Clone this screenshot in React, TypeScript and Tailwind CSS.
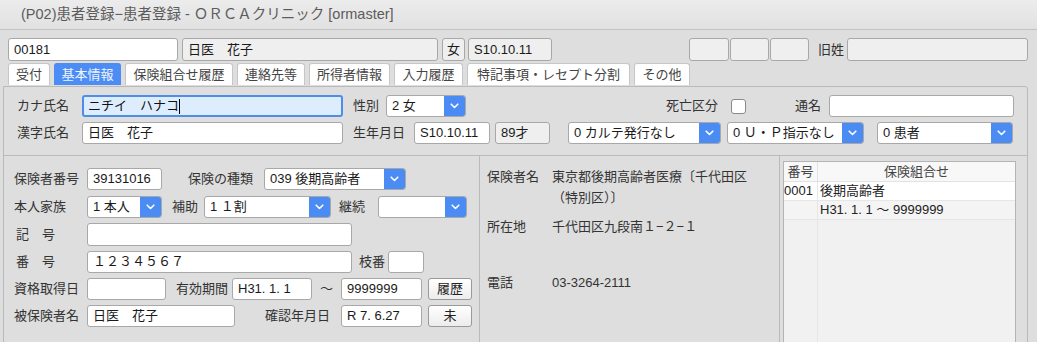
import React from "react";

const field = "h-full rounded-[3px] border border-[#a8a8a8] px-[5px] flex items-center text-[13px] text-[#1a1a1a] whitespace-nowrap overflow-hidden";
const white = `${field} bg-white`;
const gray = `${field} bg-[#efefef]`;
const label = "text-[13px] text-[#333] whitespace-nowrap flex items-center h-full";

function Chevron() {
  return (
    <svg width="9" height="6" viewBox="0 0 9 6" fill="none">
      <path d="M1.2 1.2 4.5 4.5 7.8 1.2" stroke="white" strokeWidth="1.6" strokeLinecap="round" strokeLinejoin="round" />
    </svg>
  );
}

function Select({ value, w }: { value: string; w: string }) {
  return (
    <div className={`${w} h-full flex rounded-[3px] border border-[#a8a8a8] bg-white overflow-hidden`}>
      <div className="flex-1 flex items-center px-[5px] text-[13px] text-[#1a1a1a] whitespace-nowrap">{value}</div>
      <div className="w-[21px] bg-[#4a8cf3] flex items-center justify-center">
        <Chevron />
      </div>
    </div>
  );
}

function Btn({ text }: { text: string }) {
  return (
    <div className="ml-[6px] w-[44px] h-full rounded-[3px] border border-[#9a9a9a] bg-gradient-to-b from-white to-[#ececec] flex items-center justify-center text-[13px] text-[#222]">
      {text}
    </div>
  );
}

const tabs = [
  { t: "受付", w: "w-[42px]" },
  { t: "基本情報", w: "w-[67px]", active: true },
  { t: "保険組合せ履歴", w: "w-[108px]" },
  { t: "連絡先等", w: "w-[68px]" },
  { t: "所得者情報", w: "w-[81px]" },
  { t: "入力履歴", w: "w-[69px]" },
  { t: "特記事項・レセプト分割", w: "w-[163px]" },
  { t: "その他", w: "w-[56px]" },
];

export default function App() {
  return (
    <div className="w-[1037px] h-[342px] overflow-hidden bg-[#dedede] font-['Liberation_Sans','Noto_Sans_CJK_JP',sans-serif]">
      {/* title bar */}
      <div className="h-[30px] border-b border-[#c2c2c2] bg-gradient-to-b from-[#ececec] to-[#e1e1e1] pl-[21px] flex items-center text-[14.5px] text-[#5c5c5c]">
        (P02)患者登録−患者登録 - ＯＲＣＡクリニック [ormaster]
      </div>

      {/* patient header */}
      <div className="mt-[8px] h-[23px] pl-[8px] flex">
        <div className={`${white} w-[170px]`}>00181</div>
        <div className={`${gray} w-[256px] ml-[4px]`}>日医　花子</div>
        <div className={`${gray} w-[23px] ml-[4px] justify-center px-0`}>女</div>
        <div className={`${gray} w-[84px] ml-[3px]`}>S10.10.11</div>
        <div className={`${gray} w-[40px] ml-[137px]`} />
        <div className={`${gray} w-[39px] ml-[1px]`} />
        <div className={`${gray} w-[39px] ml-[1px]`} />
        <div className={`${label} ml-[9px] w-[29px]`}>旧姓</div>
        <div className={`${gray} w-[181px]`} />
      </div>

      {/* tabs */}
      <div className="mt-[2px] h-[22px] pl-[8px] flex gap-[4px]">
        {tabs.map((tab) => (
          <div
            key={tab.t}
            className={`${tab.w} h-full rounded-t-[3px] border border-b-0 flex items-center justify-center text-[13px] whitespace-nowrap ${
              tab.active ? "bg-[#4b8cf5] border-[#4b8cf5] text-[#eef4ff]" : "bg-white border-[#c6c6c6] text-[#444]"
            }`}
          >
            {tab.t}
          </div>
        ))}
      </div>

      {/* main panel */}
      <div className="ml-[3px] mt-[1px] w-[1025px] h-[260px] border border-[#bababa] rounded-tr-[3px] flex flex-col">
        <div className="pt-[8px] pb-[11px]">
          <div className="h-[22px] pl-[13px] flex">
            <div className={`${label} w-[65px]`}>カナ氏名</div>
            <div className="w-[261px] h-full rounded-[3px] border-2 border-[#4d8fe6] bg-[#deedfd] px-[4px] flex items-center text-[13px] text-[#111]">
              ニチイ　ハナコ<span className="w-[1px] h-[15px] bg-black" />
            </div>
            <div className={`${label} ml-[10px] w-[33px]`}>性別</div>
            <Select value="2 女" w="w-[80px]" />
            <div className={`${label} ml-[200px] w-[65px]`}>死亡区分</div>
            <div className="self-center w-[15px] h-[15px] rounded-[3px] border border-[#8a8a8a] bg-white" />
            <div className={`${label} ml-[49px] w-[34px]`}>通名</div>
            <div className={`${white} w-[185px]`} />
          </div>
          <div className="mt-[5px] h-[22px] pl-[13px] flex">
            <div className={`${label} w-[65px]`}>漢字氏名</div>
            <div className={`${white} w-[261px]`}>日医　花子</div>
            <div className={`${label} ml-[10px] w-[61px]`}>生年月日</div>
            <div className={`${white} w-[76px]`}>S10.10.11</div>
            <div className={`${gray} ml-[5px] w-[55px]`}>89才</div>
            <div className="ml-[18px] h-full flex">
              <Select value="0 カルテ発行なし" w="w-[153px]" />
            </div>
            <div className="ml-[6px] h-full flex">
              <Select value="0 Ｕ・Ｐ指示なし" w="w-[137px]" />
            </div>
            <div className="ml-[13px] h-full flex">
              <Select value="0 患者" w="w-[136px]" />
            </div>
          </div>
        </div>

        {/* lower area */}
        <div className="flex-1 border-t border-[#bababa] flex">
          {/* insurance form */}
          <div className="w-[476px] border-r border-[#bababa] pl-[10px] pt-[12px]">
            <div className="h-[22px] flex">
              <div className={`${label} w-[73px]`}>保険者番号</div>
              <div className={`${white} w-[75px]`}>39131016</div>
              <div className={`${label} ml-[26px] w-[76px]`}>保険の種類</div>
              <Select value="039 後期高齢者" w="w-[142px]" />
            </div>
            <div className="mt-[6px] h-[22px] flex">
              <div className={`${label} w-[73px]`}>本人家族</div>
              <Select value="1 本人" w="w-[75px]" />
              <div className={`${label} ml-[10px] w-[32px]`}>補助</div>
              <Select value="1 １割" w="w-[127px]" />
              <div className={`${label} ml-[8px] w-[39px]`}>継続</div>
              <Select value="" w="w-[89px]" />
            </div>
            <div className="mt-[5px] h-[23px] flex">
              <div className={`${label} w-[73px] pl-[2px]`}>記　号</div>
              <div className={`${white} w-[265px]`} />
            </div>
            <div className="mt-[5px] h-[22px] flex">
              <div className={`${label} w-[73px] pl-[2px]`}>番　号</div>
              <div className={`${white} w-[265px]`}>１２３４５６７</div>
              <div className={`${label} ml-[7px] w-[29px]`}>枝番</div>
              <div className={`${white} w-[36px]`} />
            </div>
            <div className="mt-[5px] h-[22px] flex">
              <div className={`${label} w-[73px]`}>資格取得日</div>
              <div className={`${white} w-[79px]`} />
              <div className={`${label} ml-[10px] w-[56px]`}>有効期間</div>
              <div className={`${white} w-[80px]`}>H31. 1. 1</div>
              <div className={`${label} w-[29px] justify-center`}>〜</div>
              <div className={`${white} w-[81px]`}>9999999</div>
              <Btn text="履歴" />
            </div>
            <div className="mt-[5px] h-[22px] flex">
              <div className={`${label} w-[73px]`}>被保険者名</div>
              <div className={`${white} w-[148px]`}>日医　花子</div>
              <div className={`${label} ml-[30px] w-[76px]`}>確認年月日</div>
              <div className={`${white} w-[81px]`}>R 7. 6.27</div>
              <Btn text="未" />
            </div>
          </div>

          {/* insurer info */}
          <div className="w-[300px] border-r border-[#bababa] pl-[7px] pt-[10px] text-[13px] text-[#333] leading-[21px]">
            <div className="flex">
              <div className="w-[65px] shrink-0">保険者名</div>
              <div>
                東京都後期高齢者医療〔千代田区
                <br />
                （特別区）〕
              </div>
            </div>
            <div className="flex mt-[8px]">
              <div className="w-[65px] shrink-0">所在地</div>
              <div>千代田区九段南１−２−１</div>
            </div>
            <div className="flex mt-[35px]">
              <div className="w-[65px] shrink-0">電話</div>
              <div>03-3264-2111</div>
            </div>
          </div>

          {/* combination table */}
          <div className="flex-1 pl-[3px] pt-[5px] pr-[11px]">
            <div className="h-full border border-[#b4b4b4] bg-[#f1f1f1] text-[13px] text-[#222]">
              <div className="h-[20px] flex bg-[#f8f8f8] border-b border-[#e2e2e2]">
                <div className="w-[34px] border-r border-[#e2e2e2] flex items-center justify-center text-[#444]">番号</div>
                <div className="flex-1 flex items-center justify-center text-[#444]">保険組合せ</div>
              </div>
              <div className="h-[19px] flex bg-white border-b border-[#e6e6e6]">
                <div className="w-[34px] border-r border-[#e6e6e6] flex items-center">0001</div>
                <div className="flex-1 flex items-center pl-[2px]">後期高齢者</div>
              </div>
              <div className="h-[19px] flex bg-[#f4f4f4] border-b border-[#e6e6e6]">
                <div className="w-[34px] border-r border-[#e6e6e6]" />
                <div className="flex-1 flex items-center pl-[2px]">H31. 1. 1 〜 9999999</div>
              </div>
              <div className="flex h-[140px]">
                <div className="w-[34px] border-r border-[#e6e6e6]" />
              </div>
            </div>
          </div>
        </div>
      </div>
    </div>
  );
}
